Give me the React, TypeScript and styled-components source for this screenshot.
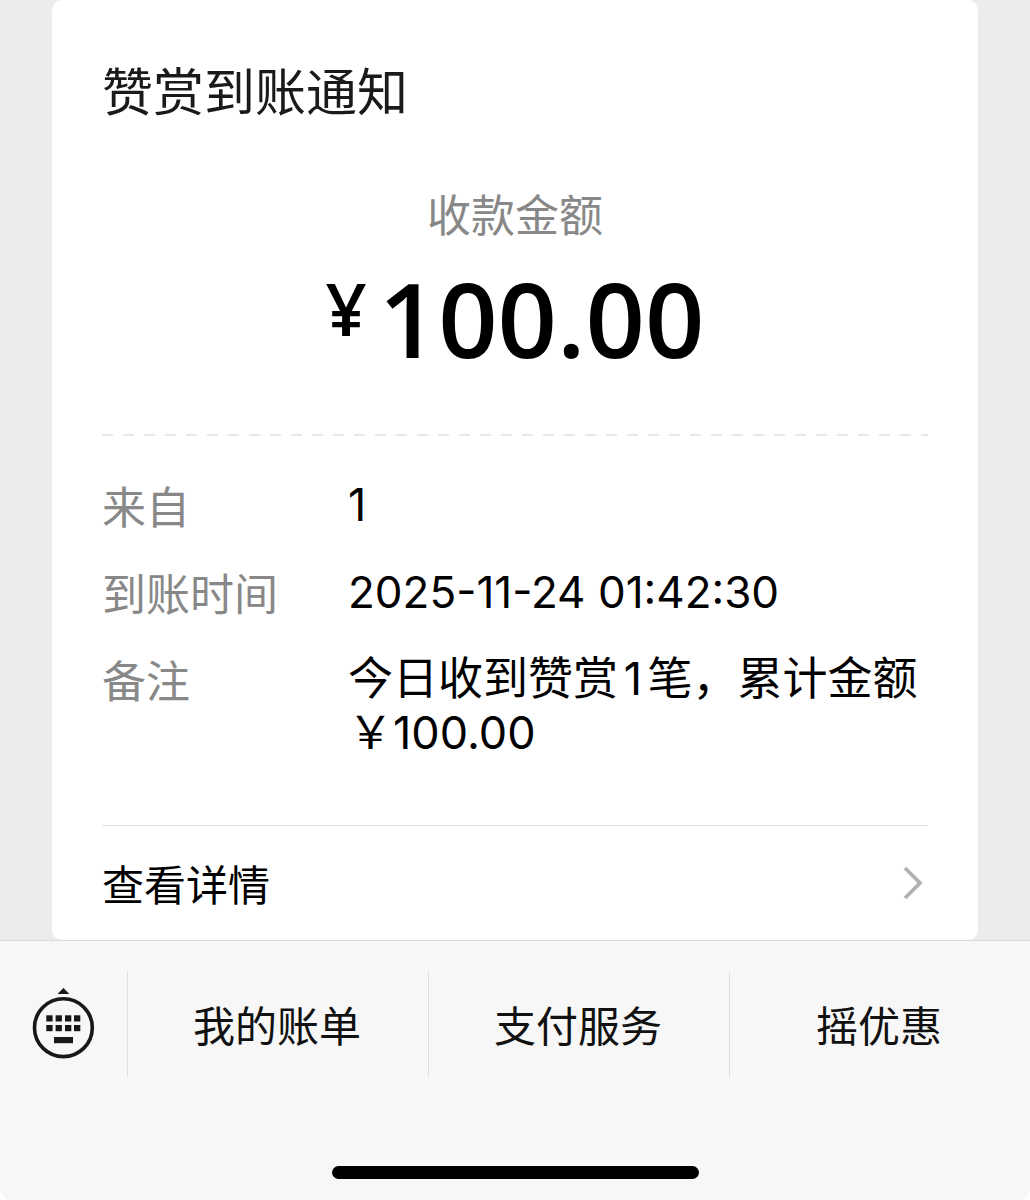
import React from "react";
import styled, { createGlobalStyle } from "styled-components";

const Global = createGlobalStyle`
  *, *::before, *::after { box-sizing: border-box; }
  body {
    margin: 0;
    background: #fff;
    color: #000;
    font-family: Inter, "Noto Sans CJK SC", sans-serif;
  }
`;

const Screen = styled.div`
  min-height: 100vh;
  display: flex;
  flex-direction: column;
`;

const Main = styled.main`
  padding: 0 52px;
  background: #ececec;
`;

const Card = styled.article`
  background: #fff;
  border-radius: 10px;
  padding: 57px 50px 0;
`;

const Title = styled.h1`
  margin: 0;
  font-size: 51px;
  line-height: 72px;
  font-weight: 400;
  color: #1a1a1a;
`;

const Amount = styled.section`
  display: flex;
  flex-direction: column;
  align-items: center;
  padding: 52px 0;
`;

const AmountLabel = styled.p`
  margin: 0;
  font-family: "Noto Sans CJK SC", sans-serif;
  font-size: 44px;
  line-height: 64px;
  color: #888;
`;

const AmountValue = styled.p`
  margin: 0;
  padding-top: 9px;
  display: flex;
  align-items: flex-start;
  gap: 12px;
  font-family: "Open Sans", sans-serif;
  font-weight: 600;
  line-height: 128px;
`;

const Currency = styled.span`
  font-size: 72px;
  line-height: 108px;
`;

const Digits = styled.span`
  font-size: 104px;
`;

const Dashes = styled.hr`
  margin: 0;
  border: 0;
  height: 2px;
  background: repeating-linear-gradient(90deg, #e8e8e8 0 11px, transparent 11px 21px);
`;

const Details = styled.dl`
  margin: 0;
  padding: 42px 0 65px;
  display: grid;
  grid-template-columns: 246px 1fr;
  row-gap: 33px;
  font-size: 45px;
  line-height: 54px;
`;

const Term = styled.dt`
  font-family: "Noto Sans CJK SC", sans-serif;
  font-size: 44px;
  color: #888;
`;

const Value = styled.dd<{ $numeric?: boolean }>`
  margin: 0;
  font-size: ${(p) => (p.$numeric ? 44 : 45)}px;
  text-autospace: normal;
`;

const DetailLink = styled.a`
  display: flex;
  align-items: center;
  justify-content: space-between;
  border-top: 1px solid #e0e0e0;
  height: 115px;
  font-family: "Noto Sans CJK SC", sans-serif;
  font-size: 42px;
  line-height: 60px;
  color: #000;
  text-decoration: none;
`;

const Bar = styled.nav`
  flex: 1;
  display: flex;
  flex-direction: column;
  justify-content: space-between;
  background: #f7f7f7;
  border-top: 1px solid #dcdcdc;
  border-radius: 0 0 12px 12px;
`;

const Menu = styled.div`
  display: flex;
  padding: 31px 0;
`;

const KeyboardButton = styled.button`
  width: 127px;
  height: 105px;
  padding: 0;
  border: 0;
  background: none;
  display: flex;
  align-items: center;
  justify-content: center;
`;

const MenuButton = styled.button`
  flex: 1;
  height: 105px;
  padding: 0 2px 2px 0;
  border: 0;
  border-left: 1px solid #dedede;
  background: none;
  font: inherit;
  font-size: 42px;
  color: #111;
`;

const HomeIndicator = styled.div`
  width: 367px;
  height: 13px;
  margin: 0 auto 21px;
  border-radius: 7px;
  background: #000;
`;

const keyColumns = [14.3, 23.6, 33, 42];
const keyRows = [27.3, 37];

const KeyboardIcon = () => (
  <svg width="63" height="73" viewBox="0 0 63 73" fill="none" aria-hidden="true">
    <circle cx="31.4" cy="39.7" r="28.9" stroke="#181818" strokeWidth="3.6" />
    <path d="M25.5 6 31.4 0l6 6z" fill="#181818" />
    {keyRows.map((y) =>
      keyColumns.map((x) => (
        <rect key={`${x}-${y}`} x={x} y={y} width="6.3" height="6.2" fill="#181818" />
      ))
    )}
    <rect x="22" y="49" width="19" height="6.2" fill="#181818" />
  </svg>
);

const Chevron = () => (
  <svg width="26" height="36" viewBox="0 0 26 36" fill="none" aria-hidden="true">
    <path d="M3 3 18 18 3 33" stroke="#b2b2b2" strokeWidth="3.8" />
  </svg>
);

const details = [
  { term: "来自", value: "1" },
  { term: "到账时间", value: "2025-11-24 01:42:30", numeric: true },
  { term: "备注", value: "今日收到赞赏1笔，累计金额￥100.00" },
];

const menu = ["我的账单", "支付服务", "摇优惠"];

export default function App() {
  return (
    <Screen lang="zh-CN">
      <Global />
      <Main>
        <Card>
          <Title>赞赏到账通知</Title>
          <Amount>
            <AmountLabel>收款金额</AmountLabel>
            <AmountValue>
              <Currency>¥</Currency>
              <Digits>100.00</Digits>
            </AmountValue>
          </Amount>
          <Dashes />
          <Details>
            {details.map(({ term, value, numeric }) => (
              <React.Fragment key={term}>
                <Term>{term}</Term>
                <Value $numeric={numeric}>{value}</Value>
              </React.Fragment>
            ))}
          </Details>
          <DetailLink href="#details">
            查看详情
            <Chevron />
          </DetailLink>
        </Card>
      </Main>
      <Bar>
        <Menu>
          <KeyboardButton type="button" aria-label="键盘">
            <KeyboardIcon />
          </KeyboardButton>
          {menu.map((label) => (
            <MenuButton key={label} type="button">{label}</MenuButton>
          ))}
        </Menu>
        <HomeIndicator />
      </Bar>
    </Screen>
  );
}
